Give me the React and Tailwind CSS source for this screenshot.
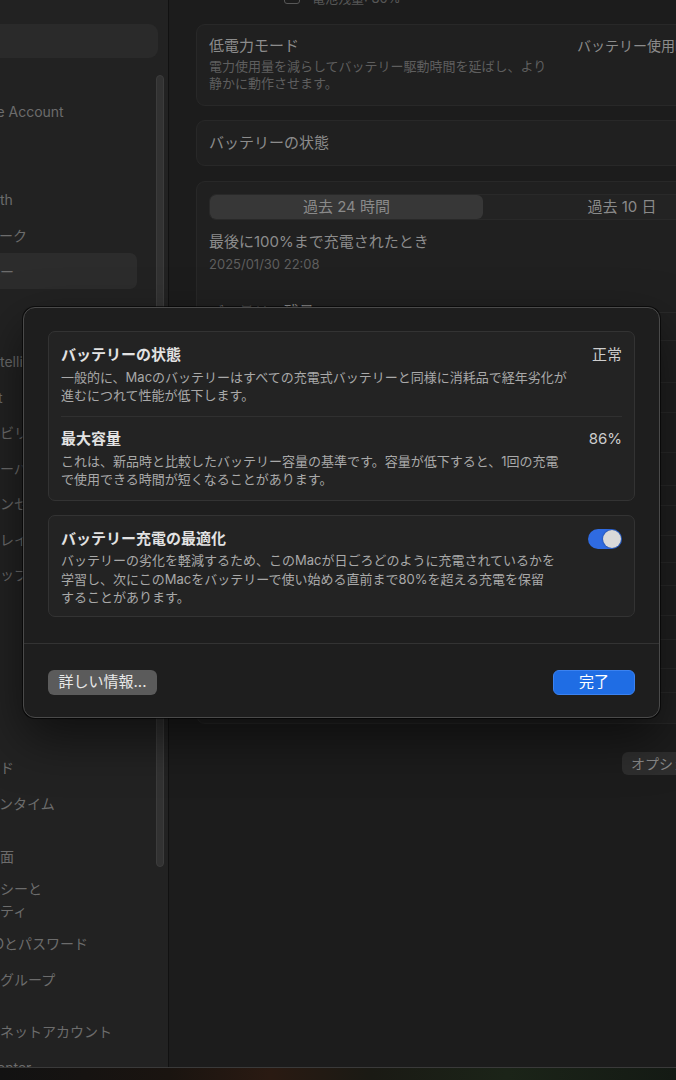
import clsx from "clsx";

const FONT = "font-['Inter','Noto_Sans_CJK_JP',sans-serif]";

function SideRow({ text, h = "h-[36px]", selected, indent = "ml-0" }) {
  return (
    <div
      className={clsx(
        "flex shrink-0 items-center whitespace-nowrap text-[14px] text-[#6c6c6c]",
        h,
        selected && "-ml-[8px] w-[145px] rounded-[7px] bg-[#2c2c2c] pl-[8px]"
      )}
    >
      <span className={indent}>{text}</span>
    </div>
  );
}

function Sidebar() {
  return (
    <aside className="relative flex h-full w-[169px] shrink-0 flex-col overflow-hidden border-r border-[#111111] bg-[#222222]">
      <div className="mt-[24px] h-[34px] w-[170px] shrink-0 -ml-[12px] rounded-[9px] bg-[#2a2a2a]" />
      <div className="h-[35px] shrink-0" />
      <SideRow text="le Account" indent="-ml-[7px]" />
      <div className="h-[16px] shrink-0" />
      <SideRow text="" />
      <SideRow text="th" />
      <SideRow text="ーク" indent="-ml-[1px]" />
      <SideRow text="ー" selected />
      <div className="h-[55px] shrink-0" />
      <SideRow h="h-[35.5px]" text="telligence" />
      <SideRow h="h-[35.5px]" text="t" indent="-ml-[2px]" />
      <SideRow h="h-[35.5px]" text="ビリティ" />
      <SideRow h="h-[35.5px]" text="ーバー" />
      <SideRow h="h-[35.5px]" text="ンセンター" />
      <SideRow h="h-[35.5px]" text="レイ" />
      <SideRow h="h-[35.5px]" text="ップ" />
      <div className="h-[157px] shrink-0" />
      <SideRow text="ド" />
      <SideRow text="ンタイム" indent="-ml-[1px]" />
      <div className="h-[17px] shrink-0" />
      <SideRow text="面" />
      <div className="flex h-[51px] shrink-0 flex-col justify-center text-[14px] leading-[22px] text-[#6c6c6c]">
        <span>シーと</span>
        <span>ティ</span>
      </div>
      <SideRow text="Dとパスワード" indent="-ml-[6px]" />
      <SideRow text="グループ" />
      <div className="h-[16px] shrink-0" />
      <SideRow text="ネットアカウント" />
      <SideRow text="enter" indent="-ml-[3px]" />

      <div className="absolute left-[156px] top-[75px] h-[792px] w-[8px] rounded-full border border-[#3c3c3c] bg-[#323232]" />
    </aside>
  );
}

function Card({ className, children }) {
  return (
    <div
      className={clsx(
        "w-[579px] shrink-0 rounded-[9px] border border-[#282828] bg-[#202020]",
        className
      )}
    >
      {children}
    </div>
  );
}

function MainPane() {
  const gridLines = [320, 348, 390, 420, 460, 493, 513, 543, 570, 593, 623, 647, 676, 700];
  return (
    <main className="relative h-full flex-1 overflow-hidden bg-[#1c1c1c]">
      <div className="flex w-[620px] flex-col pl-[27px]">
        <div className="-mt-[9px] flex h-[16px] items-center gap-[12px] pl-[88px] text-[13px] text-[#575757]">
          <div className="h-[10px] w-[16px] rounded-[3px] border border-[#575757]" />
          <span>電池残量: 80%</span>
        </div>

        <Card className="mt-[17px] flex h-[82px] justify-between px-[12px] pt-[11px]">
          <div>
            <div className="text-[15px] leading-[20px] text-[#8c8c8c]">低電力モード</div>
            <div className="mt-[2px] text-[13px] leading-[17px] text-[#5e5e5e]">
              電力使用量を減らしてバッテリー駆動時間を延ばし、より
              <br />
              静かに動作させます。
            </div>
          </div>
          <div className="w-[185px] whitespace-nowrap text-[14px] leading-[20px] text-[#8c8c8c]">
            バッテリー使用時のみ
          </div>
        </Card>

        <Card className="mt-[14px] flex h-[46px] items-center px-[12px]">
          <span className="text-[15px] text-[#8c8c8c]">バッテリーの状態</span>
        </Card>

        <Card className="mt-[15px] h-[543px] px-[12px] pt-[12px]">
          <div className="flex h-[26px] w-[553px] rounded-[7px] border border-[#292929] bg-[#232323] text-[15px] text-[#8a8a8a]">
            <div className="flex w-[273px] items-center justify-center rounded-[6px] bg-[#373737]">
              過去 24 時間
            </div>
            <div className="flex flex-1 items-center justify-center">過去 10 日</div>
          </div>
          <div className="mt-[12px] text-[15px] leading-[20px] text-[#8c8c8c]">
            最後に100%まで充電されたとき
          </div>
          <div className="mt-[3px] text-[13px] leading-[18px] text-[#5e5e5e]">2025/01/30 22:08</div>
          <div className="mt-[29px] text-[15px] leading-[20px] text-[#8c8c8c]">バッテリー残量</div>
          <div className="relative mt-[2px] h-[380px]">
            {gridLines.map((y) => (
              <div
                key={y}
                className="absolute left-0 right-0 h-px bg-[#2a2a2a]"
                style={{ top: y - 332 }}
              />
            ))}
          </div>
        </Card>

        <div className="ml-[426px] mt-[28px] flex h-[23px] w-[110px] items-center rounded-[6px] bg-[#2e2e2e] pl-[9px] text-[14px] text-[#8a8a8a]">
          オプション...
        </div>
      </div>
    </main>
  );
}

function InfoRow({ title, value, children }) {
  return (
    <div>
      <div className="flex items-center justify-between">
        <span className="text-[15px] font-semibold leading-[20px] text-[#e2e2e2]">{title}</span>
        {value}
      </div>
      <div className="mt-[3px] text-[13px] leading-[18px] text-[#a9a9a9]">{children}</div>
    </div>
  );
}

function Modal() {
  return (
    <div className="absolute left-[23px] top-[307px] flex h-[411px] w-[637px] flex-col rounded-[12px] border border-[#4a4a4a] bg-[#1e1e1e] shadow-[0_0_0_1px_rgba(0,0,0,0.6),0_20px_50px_rgba(0,0,0,0.55)]">
      <div className="px-[24px] pt-[23px]">
        <div className="rounded-[7px] border border-[#333333] bg-[#232323] px-[12px]">
          <div className="pb-[12px] pt-[13px]">
            <InfoRow
              title="バッテリーの状態"
              value={<span className="text-[15px] leading-[20px] text-[#cdcdcd]">正常</span>}
            >
              一般的に、Macのバッテリーはすべての充電式バッテリーと同様に消耗品で経年劣化が
              <br />
              進むにつれて性能が低下します。
            </InfoRow>
          </div>
          <div className="h-px bg-[#303030]" />
          <div className="pb-[12px] pt-[12px]">
            <InfoRow
              title="最大容量"
              value={<span className="text-[15px] leading-[20px] text-[#cdcdcd]">86%</span>}
            >
              これは、新品時と比較したバッテリー容量の基準です。容量が低下すると、1回の充電
              <br />
              で使用できる時間が短くなることがあります。
            </InfoRow>
          </div>
        </div>

        <div className="mt-[14px] rounded-[7px] border border-[#333333] bg-[#232323] px-[12px] pb-[9px] pt-[13px]">
          <div className="flex items-center justify-between">
            <span className="text-[15px] font-semibold leading-[20px] text-[#e2e2e2]">
              バッテリー充電の最適化
            </span>
            <div className="flex h-[20px] w-[34px] items-center justify-end rounded-full bg-[#2f6be2] pr-[1px]">
              <div className="h-[18px] w-[18px] rounded-full bg-[#d9d9d9] shadow-[0_0_2px_rgba(0,0,0,0.5)]" />
            </div>
          </div>
          <div className="mt-[2px] text-[13px] leading-[18.5px] text-[#a9a9a9]">
            バッテリーの劣化を軽減するため、このMacが日ごろどのように充電されているかを
            <br />
            学習し、次にこのMacをバッテリーで使い始める直前まで80%を超える充電を保留
            <br />
            することがあります。
          </div>
        </div>
      </div>

      <div className="mt-[26px] h-px bg-[#333333]" />

      <div className="flex items-center justify-between px-[24px] pt-[26px]">
        <button className="flex h-[25px] w-[109px] items-center justify-center rounded-[6px] bg-[#5b5b5b] text-[15px] text-[#e8e8e8]">
          詳しい情報...
        </button>
        <button className="flex h-[25px] w-[82px] items-center justify-center rounded-[6px] border border-[#3b82f0] bg-[#1f6de4] text-[15px] text-white">
          完了
        </button>
      </div>
    </div>
  );
}

export default function App() {
  return (
    <div className={clsx("relative h-[1080px] w-[676px] overflow-hidden bg-[#101010]", FONT)}>
      <div className="flex h-[1068px] border-b border-[#3a3a3a]">
        <Sidebar />
        <MainPane />
      </div>
      <div className="h-[12px] bg-[linear-gradient(90deg,#121212_0%,#1a1410_25%,#2a1a12_40%,#1a1a14_55%,#1b2418_75%,#141a14_100%)]" />
      <Modal />
    </div>
  );
}
